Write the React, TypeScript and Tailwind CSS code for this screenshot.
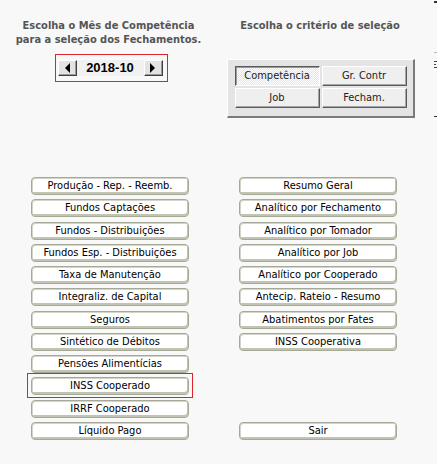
import React from "react";

const FONT = { fontFamily: '"DejaVu Sans Condensed", "Liberation Sans", sans-serif' };

const leftButtons = [
  "Produção - Rep. - Reemb.",
  "Fundos Captações",
  "Fundos - Distribuições",
  "Fundos Esp. - Distribuições",
  "Taxa de Manutenção",
  "Integraliz. de Capital",
  "Seguros",
  "Sintético de Débitos",
  "Pensões Alimentícias",
  "INSS Cooperado",
  "IRRF Cooperado",
  "Líquido Pago",
];

const rightButtons: (string | null)[] = [
  "Resumo Geral",
  "Analítico por Fechamento",
  "Analítico por Tomador",
  "Analítico por Job",
  "Analítico por Cooperado",
  "Antecip. Rateio - Resumo",
  "Abatimentos por Fates",
  "INSS Cooperativa",
  null,
  null,
  null,
  "Sair",
];

function RoundBtn({ label }: { label: string }) {
  return (
    <button
      className="w-[158px] h-[18px] rounded-[4px] bg-white border border-[#a6a996] shadow-[inset_1px_1px_0_#d3d5c8,inset_-1px_-2px_0_#c2c4b3] text-[11px] leading-[14px] text-black flex items-center justify-center p-0"
      style={FONT}
    >
      {label}
    </button>
  );
}

function ArrowBtn({ dir }: { dir: "left" | "right" }) {
  return (
    <div className="w-[19px] h-[16px] bg-[#e3e3e3] border-t border-l border-t-white border-l-white border-r border-b border-r-[#404040] border-b-[#404040] shadow-[inset_-1px_-1px_0_#9a9a9a] flex items-center justify-center">
      <svg width="6" height="10" viewBox="0 0 6 10">
        {dir === "left" ? (
          <polygon points="6,0 6,10 1,5" fill="#000" />
        ) : (
          <polygon points="0,0 0,10 5,5" fill="#000" />
        )}
      </svg>
    </div>
  );
}

function CritBtn({ label, pressed }: { label: string; pressed?: boolean }) {
  return (
    <div
      className={
        "w-[85px] h-[20px] flex items-center justify-center text-[11px] text-[#222] " +
        (pressed
          ? "border-t border-l border-t-[#5a5a5a] border-l-[#5a5a5a] border-r border-b border-r-white border-b-white shadow-[inset_1px_1px_0_#9a9a9a] bg-[repeating-conic-gradient(#ffffff_0_25%,#e4e4e4_0_50%)] bg-[length:2px_2px]"
          : "bg-[#efefef] border-t border-l border-t-white border-l-white border-r border-b border-r-[#5a5a5a] border-b-[#5a5a5a] shadow-[inset_-1px_-1px_0_#a6a6a6]")
      }
      style={FONT}
    >
      {label}
    </div>
  );
}

export default function App() {
  return (
    <div className="w-[437px] h-[464px] bg-[#f8f8f8] flex overflow-hidden">
      <div className="w-[434px] flex flex-col">
        <div className="grid grid-cols-[220px_200px] pt-[19px]">
          <div className="flex flex-col items-center">
            <div
              className="text-center font-bold text-[11px] leading-[14px] text-[#555555] -ml-[3px]"
              style={FONT}
            >
              Escolha o Mês de Competência
              <br />
              para a seleção dos Fechamentos.
            </div>
            <div className="mt-[7px] ml-[2px] w-[113px] h-[28px] border border-[#e0242b] flex items-center px-[2px]">
              <ArrowBtn dir="left" />
              <div
                className="w-[67px] h-[16px] bg-[#f1f1f1] flex items-center justify-center font-bold text-[13px] text-black"
                style={{ fontFamily: '"Liberation Sans", sans-serif' }}
              >
                2018-10
              </div>
              <ArrowBtn dir="right" />
            </div>
          </div>
          <div className="flex flex-col items-center">
            <div
              className="text-center font-bold text-[11px] leading-[14px] text-[#555555]"
              style={FONT}
            >
              Escolha o critério de seleção
            </div>
            <div className="mt-[26px] ml-[1px] w-[188px] h-[59px] bg-[#e4e4e4] border-t border-l border-t-white border-l-white border-r-2 border-b-2 border-r-[#7a7a7a] border-b-[#7a7a7a] pt-[6px] pl-[7px]">
              <div className="grid grid-cols-[85px_85px] gap-[2px]">
                <CritBtn label="Competência" pressed />
                <CritBtn label="Gr. Contr" />
                <CritBtn label="Job" />
                <CritBtn label="Fecham." />
              </div>
            </div>
          </div>
        </div>
        <div className="grid grid-cols-[220px_200px] mt-[59px]">
          <div className="flex flex-col items-center gap-[4.27px]">
            {leftButtons.map((b) =>
              b === "INSS Cooperado" ? (
                <div
                  key={b}
                  className="border border-[#e0242b] pl-[3px] pr-[3px] pt-[3px] pb-[2px] -mt-[4px] -mb-[3px]"
                >
                  <RoundBtn label={b} />
                </div>
              ) : (
                <RoundBtn key={b} label={b} />
              )
            )}
          </div>
          <div className="flex flex-col items-start pl-[19px] gap-[4.27px]">
            {rightButtons.map((b, i) =>
              b ? <RoundBtn key={i} label={b} /> : <div key={i} className="h-[18px]" />
            )}
          </div>
        </div>
      </div>
      <div className="w-[3px] flex flex-col">
        <div className="mt-[1px] h-[2px] w-[3px] bg-[#333]" />
        <div className="mt-[49px] h-[1px] w-[3px] bg-[#bbb]" />
        <div className="mt-[8px] h-[1px] w-[3px] bg-[#444]" />
        <div className="mt-[2px] h-[1px] w-[2px] bg-[#444]" />
        <div className="mt-[2px] h-[1px] w-[3px] bg-[#444]" />
        <div className="mt-[48px] h-[1px] w-[3px] bg-[#333]" />
      </div>
    </div>
  );
}
